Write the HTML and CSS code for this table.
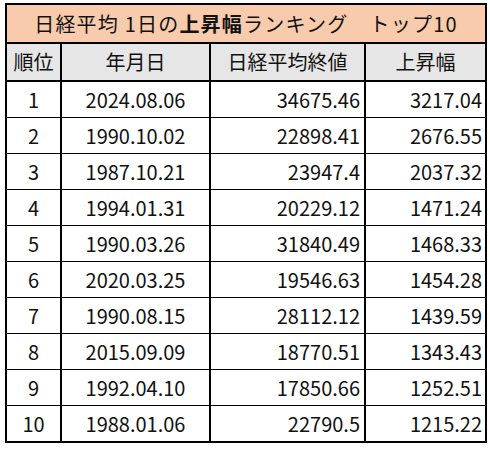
FILE: index.html
```html
<!DOCTYPE html>
<html lang="ja">
<head>
<meta charset="utf-8">
<link rel="stylesheet" href="styles.css">
</head>
<body>
<table class="rank">
  <colgroup>
    <col class="c-rank">
    <col class="c-date">
    <col class="c-close">
    <col class="c-rise">
  </colgroup>
  <thead>
    <tr class="title-row">
      <th colspan="4">日経平均 1日の<b>上昇幅</b>ランキング　トップ10</th>
    </tr>
    <tr class="head-row">
      <th>順位</th>
      <th>年月日</th>
      <th>日経平均終値</th>
      <th>上昇幅</th>
    </tr>
  </thead>
  <tbody>
    <tr><td class="ctr">1</td><td class="ctr">2024.08.06</td><td class="num">34675.46</td><td class="num last">3217.04</td></tr>
    <tr><td class="ctr">2</td><td class="ctr">1990.10.02</td><td class="num">22898.41</td><td class="num last">2676.55</td></tr>
    <tr><td class="ctr">3</td><td class="ctr">1987.10.21</td><td class="num">23947.4</td><td class="num last">2037.32</td></tr>
    <tr><td class="ctr">4</td><td class="ctr">1994.01.31</td><td class="num">20229.12</td><td class="num last">1471.24</td></tr>
    <tr><td class="ctr">5</td><td class="ctr">1990.03.26</td><td class="num">31840.49</td><td class="num last">1468.33</td></tr>
    <tr><td class="ctr">6</td><td class="ctr">2020.03.25</td><td class="num">19546.63</td><td class="num last">1454.28</td></tr>
    <tr><td class="ctr">7</td><td class="ctr">1990.08.15</td><td class="num">28112.12</td><td class="num last">1439.59</td></tr>
    <tr><td class="ctr">8</td><td class="ctr">2015.09.09</td><td class="num">18770.51</td><td class="num last">1343.43</td></tr>
    <tr><td class="ctr">9</td><td class="ctr">1992.04.10</td><td class="num">17850.66</td><td class="num last">1252.51</td></tr>
    <tr><td class="ctr">10</td><td class="ctr">1988.01.06</td><td class="num">22790.5</td><td class="num last">1215.22</td></tr>
  </tbody>
</table>
</body>
</html>
```
FILE: styles.css
```css
html, body {
  margin: 0;
  padding: 0;
  background: #ffffff;
}

body {
  padding: 3px 0 0 5px;
  font-family: "Noto Sans CJK JP", "Noto Sans", sans-serif;
  color: #111111;
}

.rank {
  border-collapse: collapse;
  table-layout: fixed;
  width: 480px;
  border: 2px solid #000;
  font-size: 20px;
  line-height: 1;
}

.c-rank { width: 55px; }
.c-date { width: 149px; }
.c-close { width: 155px; }
.c-rise { width: 121px; }

.rank th,
.rank td {
  padding: 0;
  font-weight: 400;
  white-space: nowrap;
}

.title-row th {
  height: 37px;
  background: #f8cbad;
  border-bottom: 2px solid #000;
  text-align: center;
  letter-spacing: 1.2px;
}

.title-row b {
  font-weight: 700;
}

.head-row th {
  height: 36px;
  background: #e7e6e6;
  border: 2px solid #000;
  text-align: center;
}

.rank td {
  height: 35px;
  border-left: 2px solid #000;
  border-right: 2px solid #000;
  border-bottom: 1px solid #000;
}

.rank td.ctr {
  text-align: center;
}

.rank td.num {
  text-align: right;
  padding-right: 4px;
}

.rank td.last {
  padding-right: 3px;
}

.rank tbody tr:last-child td {
  border-bottom: 2px solid #000;
}
```
